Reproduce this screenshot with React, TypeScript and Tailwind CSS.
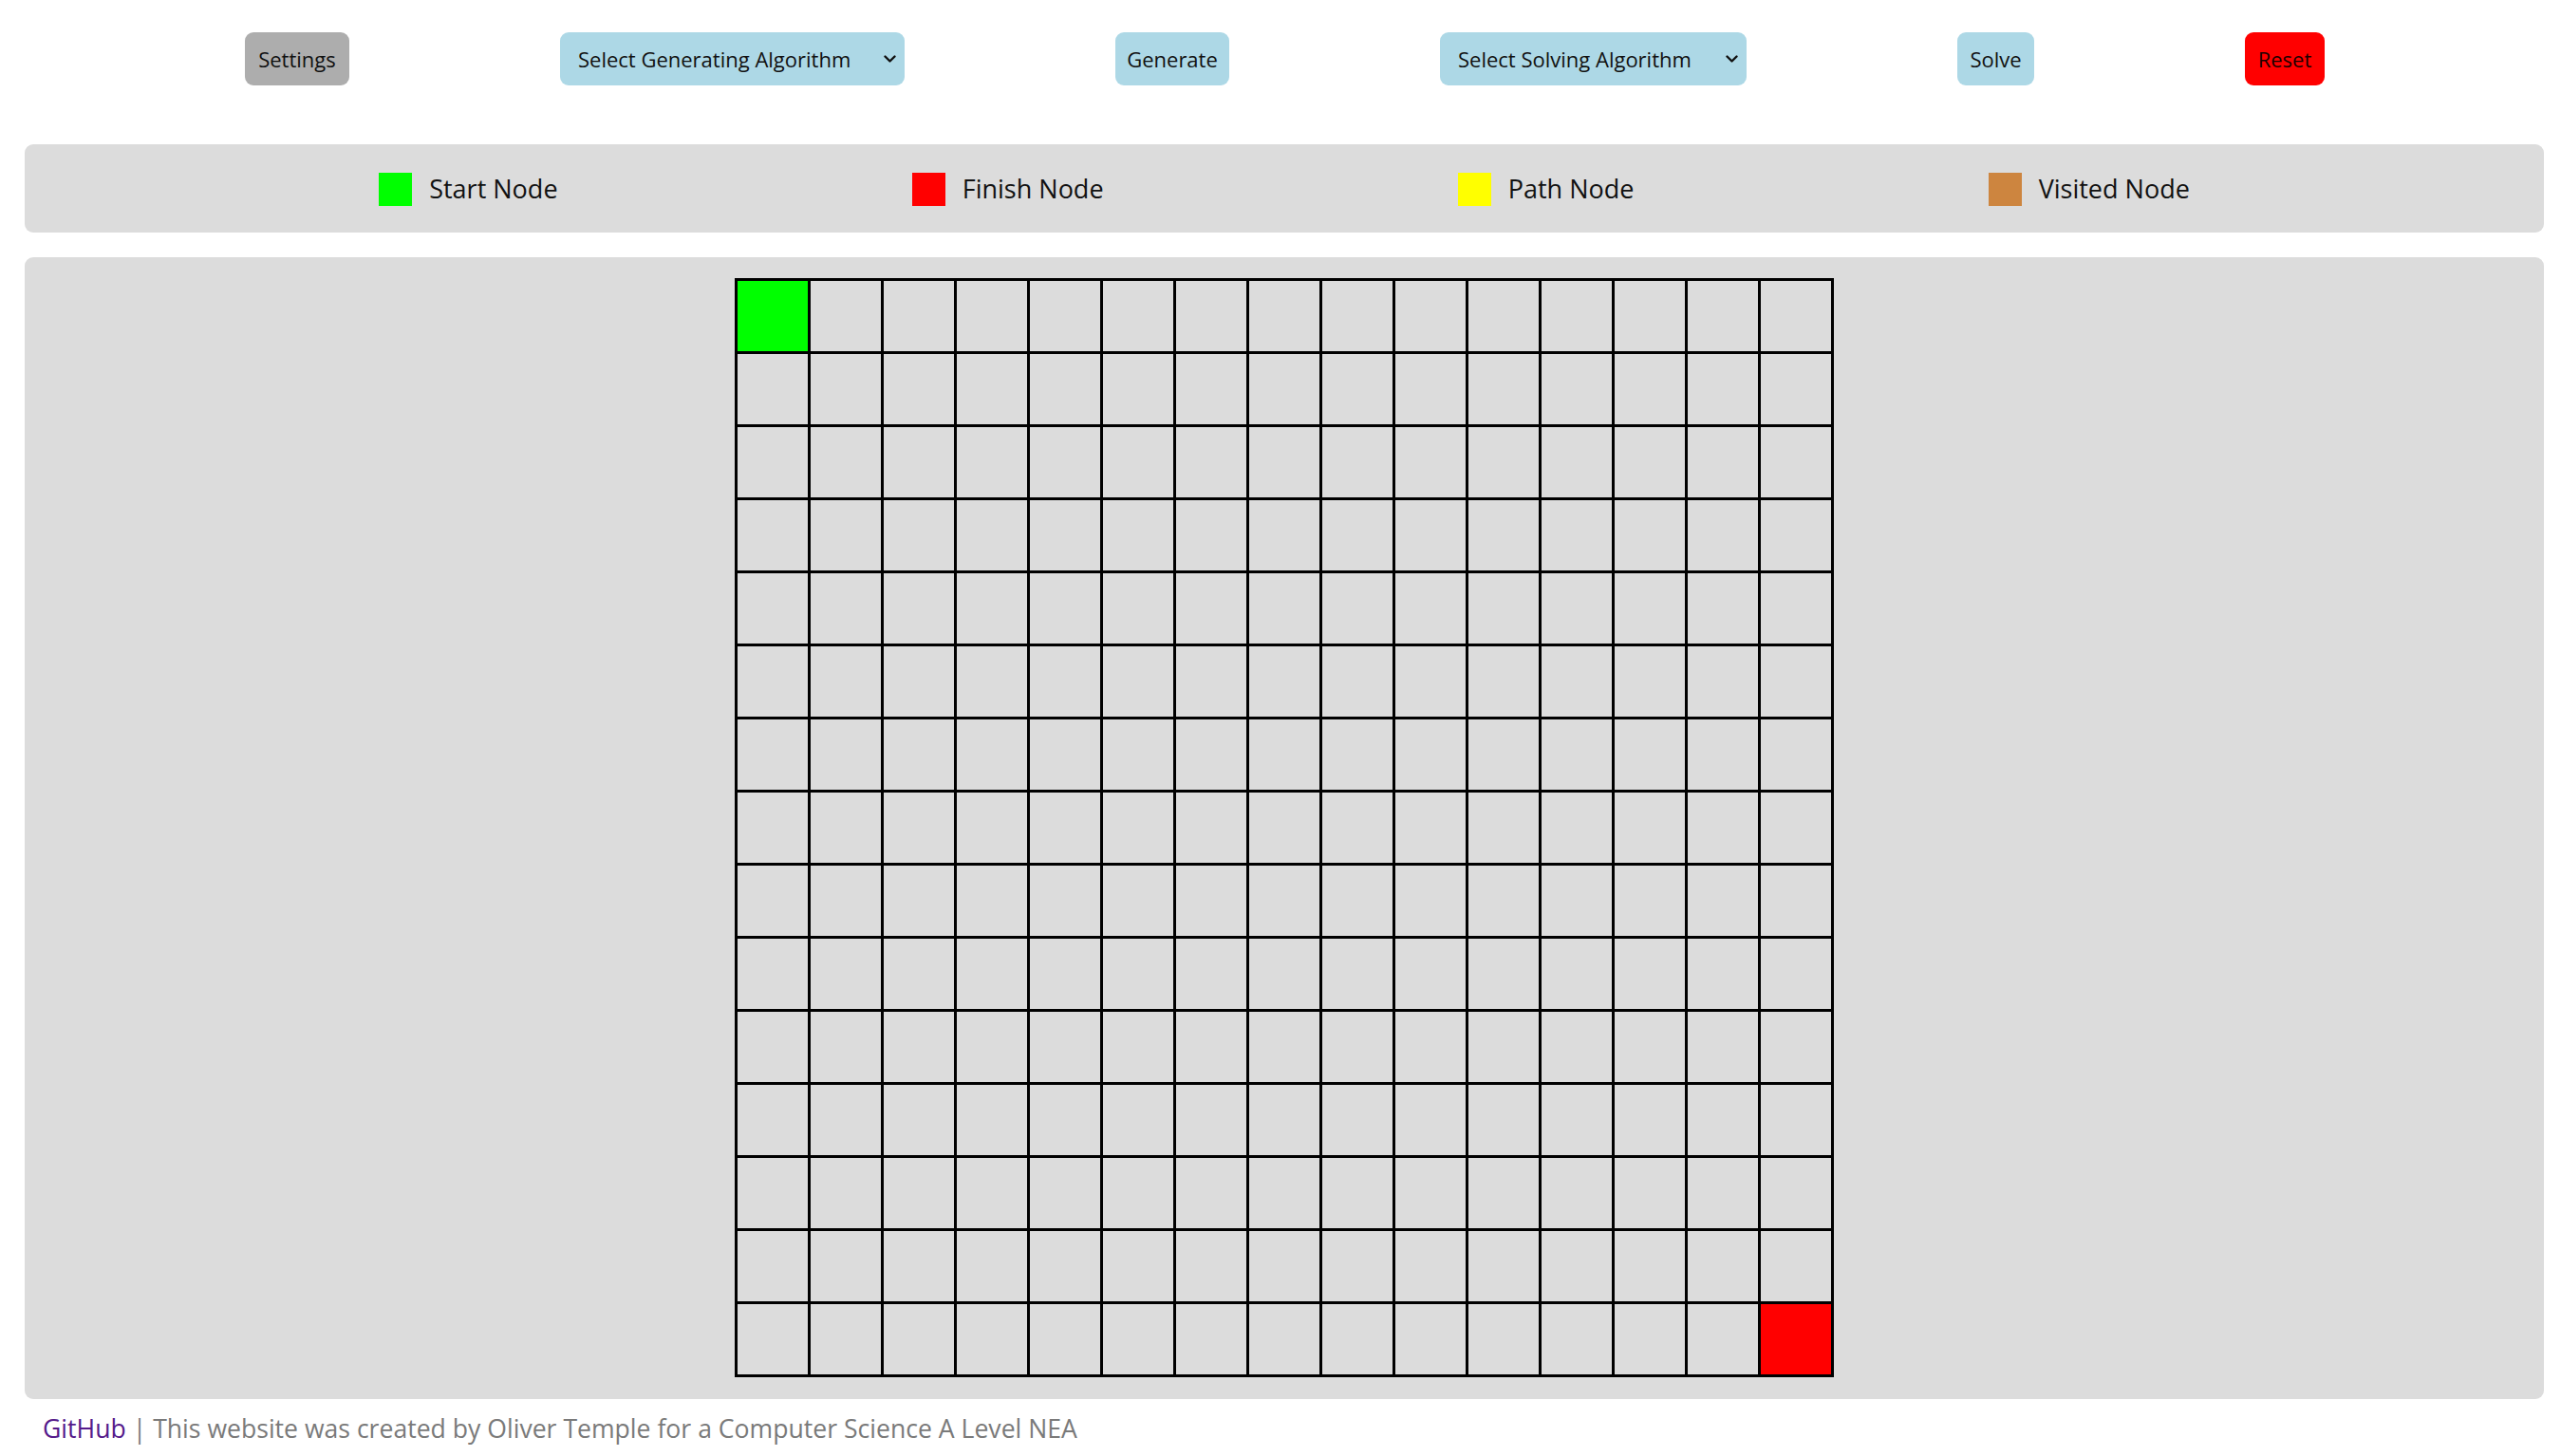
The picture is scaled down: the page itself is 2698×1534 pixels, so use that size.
import React from "react";

const N = 15;

function Chevron() {
  return (
    <svg width="13" height="9" viewBox="0 0 13 9" className="shrink-0">
      <polyline points="1.5,1.5 6.5,6.5 11.5,1.5" fill="none" stroke="#111" strokeWidth="2.4" strokeLinecap="round" strokeLinejoin="round" />
    </svg>
  );
}

function LegendItem({ color, label }: { color: string; label: string }) {
  return (
    <div className="flex items-center gap-[18px]">
      <div className="w-[35px] h-[35px]" style={{ backgroundColor: color }} />
      <span className="text-[27px] text-[#111]">{label}</span>
    </div>
  );
}

export default function App() {
  const cells = [];
  for (let r = 0; r < N; r++) {
    for (let c = 0; c < N; c++) {
      let bg = "bg-[#dcdcdc]";
      if (r === 0 && c === 0) bg = "bg-[#00ff00]";
      if (r === N - 1 && c === N - 1) bg = "bg-[#ff0000]";
      cells.push(<div key={`${r}-${c}`} className={`w-[74px] h-[74px] ${bg}`} />);
    }
  }
  return (
    <div className="min-h-[1534px] bg-white text-black" style={{ fontFamily: '"Open Sans", "Noto Sans", sans-serif' }}>
      <div className="flex justify-evenly items-center pl-[36px] pr-[27px] pt-[34px]">
        <button className="w-[110px] h-[56px] rounded-[9px] bg-[#adadad] text-[22px] text-[#111] flex items-center justify-center">
          Settings
        </button>
        <div className="w-[363px] h-[56px] rounded-[9px] bg-[#add8e6] text-[22px] text-[#111] flex items-center justify-between pl-[19px] pr-[9px]">
          <span>Select Generating Algorithm</span>
          <Chevron />
        </div>
        <button className="w-[120px] h-[56px] rounded-[9px] bg-[#add8e6] text-[22px] text-[#111] flex items-center justify-center">
          Generate
        </button>
        <div className="w-[323px] h-[56px] rounded-[9px] bg-[#add8e6] text-[22px] text-[#111] flex items-center justify-between pl-[19px] pr-[9px]">
          <span>Select Solving Algorithm</span>
          <Chevron />
        </div>
        <button className="w-[81px] h-[56px] rounded-[9px] bg-[#add8e6] text-[22px] text-[#111] flex items-center justify-center">
          Solve
        </button>
        <button className="w-[84px] h-[56px] rounded-[9px] bg-[#ff0000] text-[22px] text-[#1a0000] flex items-center justify-center">
          Reset
        </button>
      </div>

      <div className="ml-[26px] mr-[18px] mt-[62px] h-[93px] pt-[2px] rounded-[9px] bg-[#dcdcdc] flex justify-evenly items-center">
        <LegendItem color="#00ff00" label="Start Node" />
        <LegendItem color="#ff0000" label="Finish Node" />
        <LegendItem color="#ffff00" label="Path Node" />
        <LegendItem color="#cd853f" label="Visited Node" />
      </div>

      <div className="ml-[26px] mr-[18px] mt-[26px] rounded-[9px] bg-[#dcdcdc] pt-[22px] pb-[23px] flex justify-center">
        <div className="grid grid-cols-[repeat(15,74px)] gap-[3px] p-[3px] bg-black">{cells}</div>
      </div>

      <div className="pl-[45px] pt-[13px] text-[26.6px] leading-[36px] text-[#7a7a7a]">
        <a className="text-[#551a8b]">GitHub</a> | This website was created by Oliver Temple for a Computer Science A Level NEA
      </div>
    </div>
  );
}
